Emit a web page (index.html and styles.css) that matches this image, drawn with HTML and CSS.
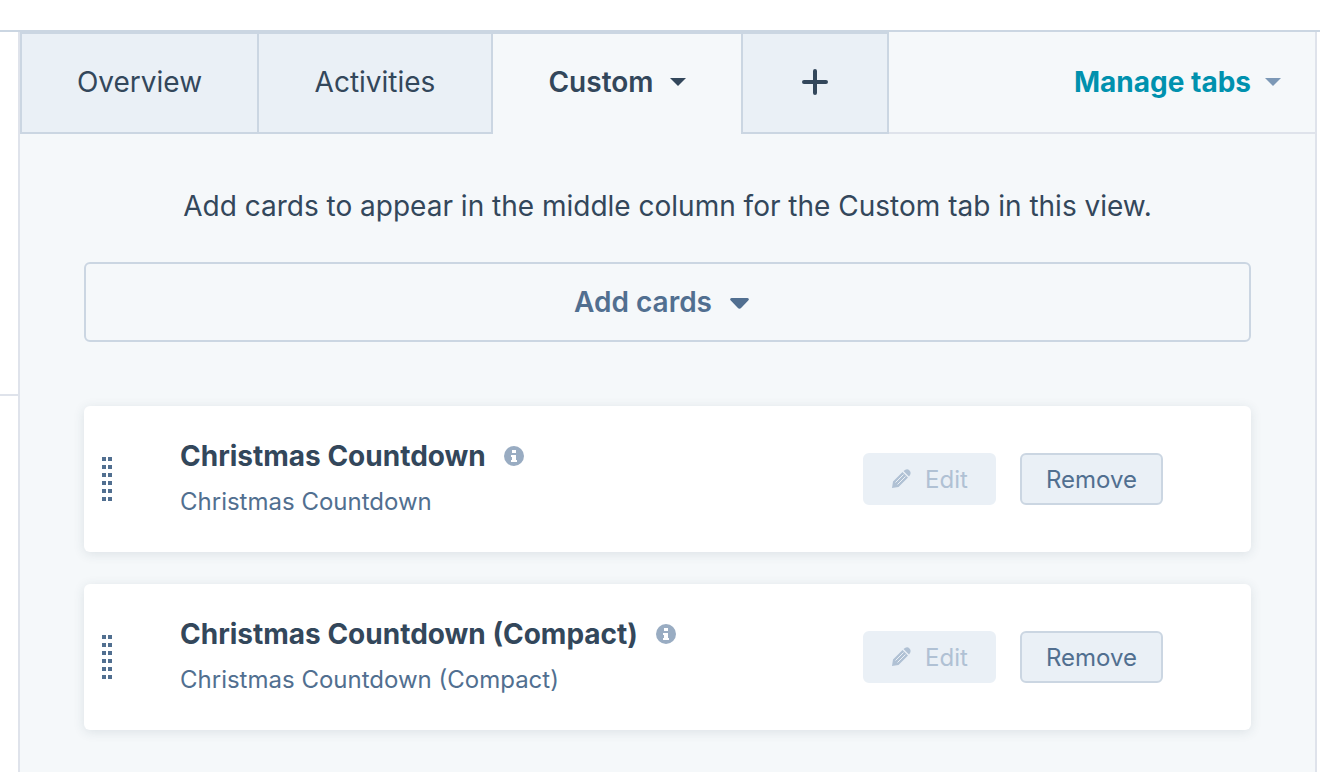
FILE: index.html
```html
<!DOCTYPE html>
<html lang="en">
<head>
<meta charset="utf-8">
<meta name="viewport" content="width=device-width, initial-scale=1">
<title>Customize record view</title>
<link rel="stylesheet" href="styles.css">
</head>
<body>
<header class="topbar"></header>
<div class="workspace">
  <aside class="sidebar"><div class="sidebar-section"></div></aside>
  <main class="panel">
    <nav class="tabs">
      <button class="tab tab-overview" type="button">Overview</button>
      <button class="tab tab-activities" type="button">Activities</button>
      <button class="tab tab-custom active" type="button">Custom
        <svg class="caret" viewBox="0 0 16 8" aria-hidden="true"><path d="M0 0H16L8 8Z"/></svg>
      </button>
      <button class="tab tab-add" type="button" aria-label="Add tab">
        <svg class="plus" viewBox="0 0 26 26" aria-hidden="true"><path d="M13 2V24M2 13H24"/></svg>
      </button>
      <div class="manage">
        <button class="manage-button" type="button">Manage tabs
          <svg class="caret" viewBox="0 0 16 8" aria-hidden="true"><path d="M0 0H16L8 8Z"/></svg>
        </button>
      </div>
    </nav>
    <section class="content">
      <p class="intro">Add cards to appear in the middle column for the Custom tab in this view.</p>
      <button class="add-cards" type="button">Add cards
        <svg class="add-caret" viewBox="0 0 19 14" aria-hidden="true"><path d="M1.5 3H17.500Q20 3.800 18 5.800L11.300 12.800Q9.500 14.500 7.700 12.800L1 5.800Q-1 3.800 1.500 3Z"/></svg>
      </button>
      <ul class="cards">
        <li class="card">
          <svg class="handle" viewBox="0 0 10 44" aria-hidden="true"><path d="M2 0V44M8 0V44"/></svg>
          <div class="details">
            <h2 class="title">Christmas Countdown
              <svg class="info" viewBox="0 0 20 20" aria-hidden="true"><circle cx="10" cy="10" r="10"/><path d="M8 4h4v3H8zM7 9h5v5h1v2H7v-2h1v-3H7z"/></svg>
            </h2>
            <p class="subtitle">Christmas Countdown</p>
          </div>
          <div class="actions">
            <button class="action edit" type="button" disabled>
              <svg class="pencil" viewBox="0 0 20 20" aria-hidden="true"><path d="M1 19L2 12.500 11.500 3 17 8.500 7.500 18ZM12.500 2Q16-1 18.500 1.500T18 7.500Z"/><path class="pencil-lines" d="M4.500 13.500L12.500 5.500M6.500 15.500L14.500 7.500"/></svg>
              Edit
            </button>
            <button class="action remove" type="button">Remove</button>
          </div>
        </li>
        <li class="card">
          <svg class="handle" viewBox="0 0 10 44" aria-hidden="true"><path d="M2 0V44M8 0V44"/></svg>
          <div class="details">
            <h2 class="title">Christmas Countdown (Compact)
              <svg class="info" viewBox="0 0 20 20" aria-hidden="true"><circle cx="10" cy="10" r="10"/><path d="M8 4h4v3H8zM7 9h5v5h1v2H7v-2h1v-3H7z"/></svg>
            </h2>
            <p class="subtitle">Christmas Countdown (Compact)</p>
          </div>
          <div class="actions">
            <button class="action edit" type="button" disabled>
              <svg class="pencil" viewBox="0 0 20 20" aria-hidden="true"><path d="M1 19L2 12.500 11.500 3 17 8.500 7.500 18ZM12.500 2Q16-1 18.500 1.500T18 7.500Z"/><path class="pencil-lines" d="M4.500 13.500L12.500 5.500M6.500 15.500L14.500 7.500"/></svg>
              Edit
            </button>
            <button class="action remove" type="button">Remove</button>
          </div>
        </li>
      </ul>
    </section>
  </main>
</div>
</body>
</html>
```
FILE: styles.css
```css
* { box-sizing: border-box; }
body {
  margin: 0;
  min-height: 100vh;
  display: flex;
  flex-direction: column;
  background: #fff;
  color: #33475b;
  font-family: Inter, "Liberation Sans", sans-serif;
  font-size: 28px;
  font-weight: 400;
}
button { font: inherit; color: inherit; margin: 0; cursor: pointer; }
h2, p, ul { margin: 0; padding: 0; }
svg { display: block; flex: none; fill: currentColor; }

.topbar { height: 32px; flex: none; border-bottom: 2px solid #cbd6e2; }
.workspace { flex: 1; display: flex; padding-right: 3px; }
.sidebar { width: 18px; flex: none; }
.sidebar-section { height: 364px; border-bottom: 2px solid #dfe3eb; }
.panel {
  flex: 1;
  min-width: 0;
  background: #f5f8fa;
  border: solid #dfe3eb;
  border-width: 0 2px;
}

.tabs { display: flex; height: 102px; }
.tab {
  display: flex;
  align-items: center;
  justify-content: center;
  gap: 16px;
  padding: 0 0 2px;
  background: #eaf0f6;
  border: 2px solid #cbd6e2;
  border-right-width: 0;
}
.tab-overview { flex: 0 0 237px; }
.tab-activities { flex: 0 0 236px; border-right-width: 2px; }
.tab-custom { flex: 0 0 248px; }
.tab-add { flex: 0 0 148px; border-right-width: 2px; }
.tab.active {
  padding-bottom: 4px;
  background: #f5f8fa;
  border-width: 2px 0 0;
  font-weight: 600;
}
.caret { width: 16px; height: 8px; }
.plus { width: 26px; height: 26px; stroke: currentColor; stroke-width: 4; stroke-linecap: round; }
.manage {
  flex: 1;
  display: flex;
  align-items: center;
  justify-content: flex-end;
  padding-right: 34px;
  border-bottom: 2px solid #dfe3eb;
}
.manage-button {
  display: flex;
  align-items: center;
  gap: 14px;
  padding: 0;
  border: 0;
  background: none;
  color: #0091ae;
  font-weight: 700;
}
.manage-button .caret { color: #7c98b6; }

.content { padding: 52px 64px 40px; }
.intro { line-height: 40px; text-align: center; }
.add-cards {
  display: flex;
  align-items: center;
  justify-content: center;
  gap: 18px;
  width: 100%;
  height: 80px;
  margin-top: 36px;
  padding: 0 12px 0 0;
  border: 2px solid #cbd6e2;
  border-radius: 6px;
  background: #f5f8fa;
  color: #516f90;
  font-weight: 600;
}
.add-caret { width: 19px; height: 14px; }

.cards { display: grid; gap: 32px; margin-top: 64px; list-style: none; }
.card {
  display: flex;
  align-items: center;
  padding: 32px 88px 32px 18px;
  border-radius: 6px;
  background: #fff;
  box-shadow: 0 2px 12px rgba(45, 62, 80, 0.12);
}
.handle {
  width: 10px;
  height: 44px;
  margin-right: 68px;
  color: #516f90;
  stroke: currentColor;
  stroke-width: 4;
  stroke-dasharray: 4 4;
}
.details { flex: 1; display: grid; gap: 10px; }
.title {
  display: flex;
  align-items: center;
  gap: 18px;
  font-size: 28px;
  font-weight: 700;
  line-height: 36px;
}
.info { width: 20px; height: 20px; color: #99acc2; }
.info path { fill: #fff; }
.subtitle { font-size: 24px; line-height: 36px; color: #516f90; }
.actions { display: flex; gap: 24px; }
.action {
  display: flex;
  align-items: center;
  justify-content: center;
  gap: 14px;
  height: 52px;
  padding: 0;
  border: 2px solid #eaf0f6;
  border-radius: 6px;
  background: #eaf0f6;
  font-size: 24px;
}
.edit { width: 133px; color: #b0c1d4; cursor: default; }
.remove { width: 143px; border-color: #cbd6e2; color: #516f90; }
.pencil { width: 20px; height: 20px; }
.pencil-lines { stroke: #eaf0f6; stroke-width: 1; }
```
